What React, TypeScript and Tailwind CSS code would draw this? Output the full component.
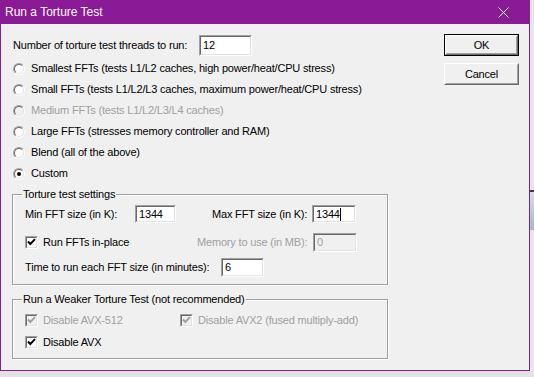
import React from "react";

const T = "font-['Liberation_Sans',Arial,sans-serif] text-[11px] tracking-[-0.18px] leading-[13px]";

function Sunken({ w, h, value, disabled, cursor }: { w: number; h: number; value: string; disabled?: boolean; cursor?: boolean }) {
  return (
    <div
      className="flex border border-t-[#a0a0a0] border-l-[#a0a0a0] border-b-white border-r-white"
      style={{ width: w, height: h }}
    >
      <div
        className={`flex-1 flex items-center pl-[2px] border border-t-[#696969] border-l-[#696969] border-b-[#e3e3e3] border-r-[#e3e3e3] ${
          disabled ? "bg-[#f0f0f0] text-[#a0a0a0]" : "bg-white text-black"
        }`}
      >
        <span className={T}>{value}</span>
        {cursor && <span className="w-[1px] h-[13px] bg-black" />}
      </div>
    </div>
  );
}

function Radio({ label, checked, disabled }: { label: string; checked?: boolean; disabled?: boolean }) {
  return (
    <div className="flex items-center h-[21px]">
      <span className="w-[12px] h-[12px] rounded-full flex border border-t-[#a0a0a0] border-l-[#a0a0a0] border-b-white border-r-white">
        <span
          className={`flex-1 rounded-full flex items-center justify-center border border-t-[#696969] border-l-[#696969] border-b-[#e3e3e3] border-r-[#e3e3e3] ${
            disabled ? "bg-[#f0f0f0]" : "bg-white"
          }`}
        >
          {checked && <span className="w-[4px] h-[4px] rounded-full bg-black" />}
        </span>
      </span>
      <span className={`${T} ml-[6px] ${disabled ? "text-[#a0a0a0]" : "text-black"}`}>{label}</span>
    </div>
  );
}

function Check({ label, checked, disabled, w }: { label: string; checked?: boolean; disabled?: boolean; w?: number }) {
  return (
    <div className="flex items-center" style={w ? { width: w } : undefined}>
      <span className="w-[13px] h-[13px] flex border border-t-[#a0a0a0] border-l-[#a0a0a0] border-b-white border-r-white">
        <span
          className={`flex-1 flex items-center justify-center border border-t-[#696969] border-l-[#696969] border-b-[#e3e3e3] border-r-[#e3e3e3] ${
            disabled ? "bg-[#f0f0f0]" : "bg-white"
          }`}
        >
          {checked && (
            <svg width="9" height="9" viewBox="0 0 9 9">
              <polyline
                points="1,3.5 3.3,6 8,1.2"
                fill="none"
                stroke={disabled ? "#a0a0a0" : "#000"}
                strokeWidth="1.9"
              />
            </svg>
          )}
        </span>
      </span>
      <span className={`${T} ml-[5px] ${disabled ? "text-[#a0a0a0]" : "text-black"}`}>{label}</span>
    </div>
  );
}

function Group({ label, h, children }: { label: string; h: number; children: React.ReactNode }) {
  return (
    <div
      className="relative w-[376px] ml-[-1px] border border-[#a0a0a0] shadow-[inset_1px_1px_0_#fff,1px_1px_0_#fff] flex flex-col"
      style={{ height: h }}
    >
      <span className={`${T} absolute left-[9px] top-[-7px] px-[1px] bg-[#f0f0f0] text-black`}>{label}</span>
      {children}
    </div>
  );
}

function Button({ label, def }: { label: string; def?: boolean }) {
  return (
    <div className={`w-[75px] h-[22px] flex ${def ? "border border-[#000]" : ""}`}>
      <div className="flex-1 flex border border-t-white border-l-white border-b-[#696969] border-r-[#696969]">
        <div className="flex-1 flex items-center justify-center border border-t-[#f0f0f0] border-l-[#f0f0f0] border-b-[#a0a0a0] border-r-[#a0a0a0] bg-[#f0f0f0]">
          <span className={`${T} text-black`}>{label}</span>
        </div>
      </div>
    </div>
  );
}

export default function App() {
  return (
    <div className="w-[534px] h-[377px] bg-[#e2e2e2] flex items-start overflow-hidden">
      <div className="w-[530px] h-[371px] border border-[#8a1a95] bg-[#f0f0f0] flex flex-col shrink-0">
        <div className="h-[23px] bg-[#8a1a95] flex items-center pl-[4px] pr-[20px]">
          <span className="font-['Liberation_Sans',Arial,sans-serif] text-[12px] text-white flex-1 pb-[1px]">Run a Torture Test</span>
          <svg width="11" height="11" viewBox="0 0 11 11" className="mb-[1px]">
            <path d="M0.5 0.5 L10.5 10.5 M10.5 0.5 L0.5 10.5" stroke="#fff" strokeWidth="1" />
          </svg>
        </div>
        <div className="flex pl-[12px]">
          <div className="w-[376px] flex flex-col">
            <div className="flex items-center h-[21px] mt-[11px]">
              <span className={`${T} w-[186px] text-black`}>Number of torture test threads to run:</span>
              <Sunken w={53} h={21} value="12" />
            </div>
            <div className="flex flex-col mt-[2px]">
              <Radio label="Smallest FFTs (tests L1/L2 caches, high power/heat/CPU stress)" />
              <Radio label="Small FFTs (tests L1/L2/L3 caches, maximum power/heat/CPU stress)" />
              <Radio label="Medium FFTs (tests L1/L2/L3/L4 caches)" disabled />
              <Radio label="Large FFTs (stresses memory controller and RAM)" />
              <Radio label="Blend (all of the above)" />
              <Radio label="Custom" checked />
            </div>
            <div className="mt-[10px]">
              <Group label="Torture test settings" h={91}>
                <div className="flex items-center h-[20px] mt-[9px] pl-[12px]">
                  <span className={`${T} w-[110px] text-black`}>Min FFT size (in K):</span>
                  <Sunken w={41} h={18} value="1344" />
                  <span className={`${T} w-[36px]`} />
                  <span className={`${T} w-[100px] text-black`}>Max FFT size (in K):</span>
                  <Sunken w={44} h={18} value="1344" cursor />
                </div>
                <div className="flex items-center h-[20px] mt-[8px] pl-[12px]">
                  <Check label="Run FFTs in-place" checked w={172} />
                  <span className={`${T} w-[116px] text-[#a0a0a0]`}>Memory to use (in MB):</span>
                  <Sunken w={44} h={19} value="0" disabled />
                </div>
                <div className="flex items-center h-[20px] mt-[5px] pl-[12px]">
                  <span className={`${T} w-[196px] text-black`}>Time to run each FFT size (in minutes):</span>
                  <Sunken w={43} h={19} value="6" />
                </div>
              </Group>
            </div>
            <div className="mt-[14px]">
              <Group label="Run a Weaker Torture Test (not recommended)" h={60}>
                <div className="flex items-center h-[20px] mt-[10px] pl-[12px]">
                  <Check label="Disable AVX-512" checked disabled w={155} />
                  <Check label="Disable AVX2 (fused multiply-add)" checked disabled />
                </div>
                <div className="flex items-center h-[20px] mt-[2px] pl-[12px]">
                  <Check label="Disable AVX" checked />
                </div>
              </Group>
            </div>
          </div>
          <div className="flex flex-col ml-[55px] mt-[10px] gap-[7px]">
            <Button label="OK" def />
            <Button label="Cancel" />
          </div>
        </div>
      </div>
      <div className="w-[4px] h-[371px] bg-[#e6e6e6] flex flex-col">
        <div className="mt-[190px] h-[40px] border-t-[2px] border-[#3c3c3c] bg-gradient-to-b from-[#d4dcea] to-[#aab6c8]" />
      </div>
    </div>
  );
}
